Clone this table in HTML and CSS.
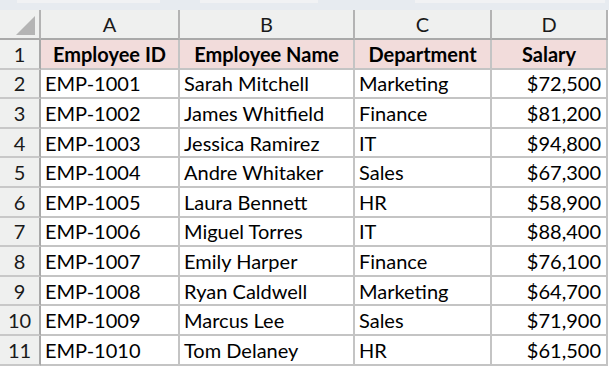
FILE: index.html
```html
<!DOCTYPE html>
<html>
<head>
<meta charset="utf-8">
<link rel="stylesheet" href="styles.css">
</head>
<body>
<div class="ribbon">
  <span class="tab t1"></span><span class="tab t2"></span><span class="tab t3"></span>
</div>
<div class="sheet">
  <div class="corner"><span class="tri"></span></div>
  <div class="colh">A</div><div class="colh">B</div><div class="colh">C</div><div class="colh">D</div>

  <div class="rowh">1</div>
  <div class="cell head">Employee ID</div><div class="cell head">Employee Name</div><div class="cell head">Department</div><div class="cell head">Salary</div>

  <div class="rowh">2</div><div class="cell">EMP-1001</div><div class="cell">Sarah Mitchell</div><div class="cell">Marketing</div><div class="cell num">$72,500</div>
  <div class="rowh">3</div><div class="cell">EMP-1002</div><div class="cell">James Whitfield</div><div class="cell">Finance</div><div class="cell num">$81,200</div>
  <div class="rowh">4</div><div class="cell">EMP-1003</div><div class="cell">Jessica Ramirez</div><div class="cell">IT</div><div class="cell num">$94,800</div>
  <div class="rowh">5</div><div class="cell">EMP-1004</div><div class="cell">Andre Whitaker</div><div class="cell">Sales</div><div class="cell num">$67,300</div>
  <div class="rowh">6</div><div class="cell">EMP-1005</div><div class="cell">Laura Bennett</div><div class="cell">HR</div><div class="cell num">$58,900</div>
  <div class="rowh">7</div><div class="cell">EMP-1006</div><div class="cell">Miguel Torres</div><div class="cell">IT</div><div class="cell num">$88,400</div>
  <div class="rowh">8</div><div class="cell">EMP-1007</div><div class="cell">Emily Harper</div><div class="cell">Finance</div><div class="cell num">$76,100</div>
  <div class="rowh">9</div><div class="cell">EMP-1008</div><div class="cell">Ryan Caldwell</div><div class="cell">Marketing</div><div class="cell num">$64,700</div>
  <div class="rowh">10</div><div class="cell">EMP-1009</div><div class="cell">Marcus Lee</div><div class="cell">Sales</div><div class="cell num">$71,900</div>
  <div class="rowh">11</div><div class="cell">EMP-1010</div><div class="cell">Tom Delaney</div><div class="cell">HR</div><div class="cell num">$61,500</div>
</div>
</body>
</html>
```
FILE: styles.css
```css
html, body {
  margin: 0;
  padding: 0;
  background: #ffffff;
  overflow: hidden;
}
body {
  font-family: Lato, "Liberation Sans", sans-serif;
  color: #000;
}
.ribbon {
  height: 10px;
  background: #e7ebf0;
  display: flex;
  align-items: flex-start;
}
.tab {
  display: block;
  height: 3px;
  background: #f1f2f4;
}
.t1 { margin-left: 17px; width: 143px; }
.t2 { margin-left: 40px; width: 118px; }
.t3 { margin-left: 97px; width: 190px; }
.sheet {
  display: grid;
  grid-template-columns: 41px 139px 175px 137px 116px;
  grid-template-rows: 30px repeat(11, 29.6px);
}
.sheet > div {
  box-sizing: border-box;
  border-right: 2px solid #c4c4c4;
  border-bottom: 2px solid #c4c4c4;
  display: flex;
  align-items: center;
  font-size: 20px;
  white-space: nowrap;
  overflow: hidden;
}
.corner, .colh, .rowh {
  background: #eff0ef;
}
.sheet > .corner, .sheet > .colh {
  border-right-color: #b3b3b3;
  border-bottom-color: #a9a9a9;
}
.sheet > .rowh {
  border-right-color: #a9a9a9;
  border-bottom-color: #c8c8c8;
}
.corner { position: relative; }
.tri {
  position: absolute;
  left: 16px;
  top: 6px;
  width: 0;
  height: 0;
  border-left: 19px solid transparent;
  border-bottom: 19px solid #b4b4b4;
}
.colh, .rowh {
  justify-content: center;
  color: #1a1a1a;
}
.cell {
  padding-left: 4px;
}
.cell.head {
  background: #f2dcdb;
  font-weight: bold;
  justify-content: center;
  padding-left: 0;
}
.cell.num {
  justify-content: flex-end;
  padding-right: 5px;
}
```
